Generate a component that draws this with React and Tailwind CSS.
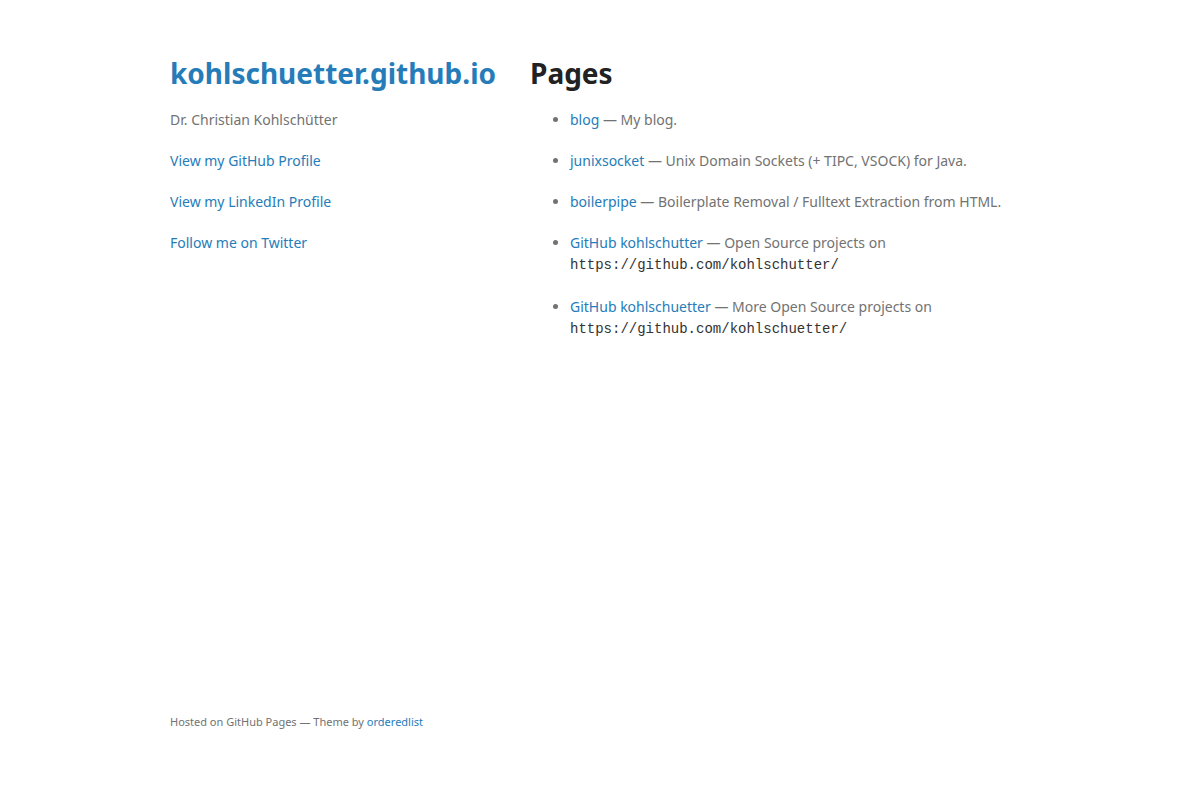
const pages = [
  { name: 'blog', desc: 'My blog.' },
  { name: 'junixsocket', desc: 'Unix Domain Sockets (+ TIPC, VSOCK) for Java.' },
  { name: 'boilerpipe', desc: 'Boilerplate Removal / Fulltext Extraction from HTML.' },
  {
    name: 'GitHub kohlschutter',
    desc: 'Open Source projects on',
    url: 'https://github.com/kohlschutter/',
  },
  {
    name: 'GitHub kohlschuetter',
    desc: 'More Open Source projects on',
    url: 'https://github.com/kohlschuetter/',
  },
]

const profiles = ['View my GitHub Profile', 'View my LinkedIn Profile', 'Follow me on Twitter']

export default function App() {
  return (
    <div className="min-h-screen bg-white px-[50px] pt-[58px] pb-[50px] font-['Noto_Sans',sans-serif] text-[14px] leading-[1.5] text-[#727272] flex flex-col">
      <div className="mx-auto w-[860px] flex-1 flex flex-col">
        <div className="flex justify-between">
          <header className="w-[270px]">
            <h1 className="mb-5 text-[28px] font-bold leading-[1.1] text-[#267CB9]">
              <a href="#">kohlschuetter.github.io</a>
            </h1>
            <p className="mb-5">Dr. Christian Kohlschütter</p>
            {profiles.map((p) => (
              <p key={p} className="mb-5">
                <a href="#" className="text-[#267CB9]">{p}</a>
              </p>
            ))}
          </header>

          <section className="w-[500px]">
            <h1 className="mb-5 text-[28px] font-bold leading-[1.1] text-[#222]">Pages</h1>
            <ul className="mb-5 list-disc pl-10">
              {pages.map((pg) => (
                <li key={pg.name}>
                  <p className="mb-5">
                    <a href="#" className="text-[#267CB9]">{pg.name}</a> — {pg.desc}
                    {pg.url && (
                      <>
                        {' '}
                        <code className="font-['Liberation_Mono',monospace] text-[#333]">{pg.url}</code>
                      </>
                    )}
                  </p>
                </li>
              ))}
            </ul>
          </section>
        </div>

        <footer className="mt-auto w-[270px] text-[11px]">
          <p className="mb-5">
            Hosted on GitHub Pages — Theme by{' '}
            <a href="#" className="text-[#267CB9]">orderedlist</a>
          </p>
        </footer>
      </div>
    </div>
  )
}
